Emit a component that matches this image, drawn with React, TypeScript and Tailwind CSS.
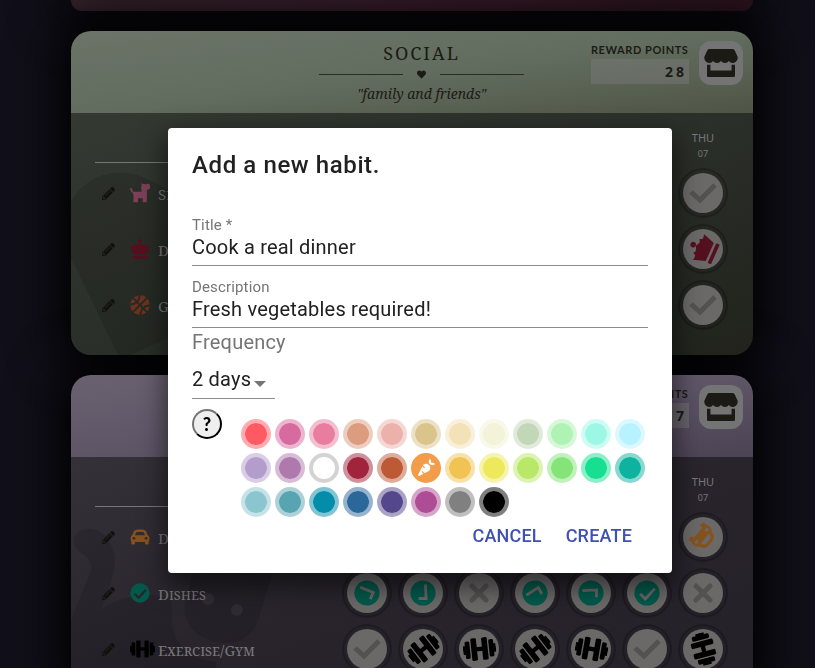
import React, { useState } from "react";
import { FaBasketballBall, FaCarAlt, FaCarrot, FaHeart, FaPencilAlt } from "react-icons/fa";

type IconName = "dog" | "crown" | "ball" | "car" | "done" | "gym";
type Mark = "check" | "cross" | number;

interface Habit {
  name: string;
  icon: IconName;
  color: string;
  marks: Mark[];
}

const SERIF = "font-['Noto_Serif','DejaVu_Serif_Condensed','DejaVu_Serif',serif]";
const DAYS = [
  ["FRI", "01"],
  ["SAT", "02"],
  ["SUN", "03"],
  ["MON", "04"],
  ["TUE", "05"],
  ["WED", "06"],
  ["THU", "07"],
];

const idle: Mark[] = ["check", "check", "check", "check", "check", "check"];

const SOCIAL: Habit[] = [
  { name: "Snuggle Dog", icon: "dog", color: "text-[#7c4058]", marks: [...idle, "check"] },
  { name: "Date Night", icon: "crown", color: "text-[#55101f]", marks: [...idle, -66] },
  { name: "Games", icon: "ball", color: "text-[#6b321f]", marks: [...idle, "check"] },
];

const HOME: Habit[] = [
  { name: "Drive", icon: "car", color: "text-[#84521f]", marks: [...idle, 130] },
  { name: "Dishes", icon: "done", color: "text-[#035a4c]", marks: [-111, -45, "cross", 195, 225, 0, "cross"] },
  { name: "Exercise/Gym", icon: "gym", color: "text-black", marks: ["check", -38, -6, -38, 10, "check", 75] },
];

const COLORS = [
  "#ff5a64", "#d76a9f", "#e87da0", "#db9c80", "#ebb1aa", "#dac48c", "#f3e2b7", "#f2f3d8", "#c2d6b8", "#aef2b4", "#9df7e5", "#b8f1ff",
  "#b39dcc", "#b079ae", "#ffffff", "#a2233c", "#bc5a36", "#f39c4a", "#f1c353", "#eee95a", "#b9e869", "#84e478", "#17df92", "#0eb3a0",
  "#8bc5d0", "#59a4b1", "#048cab", "#2b6799", "#54478b", "#ae4c96", "#808080", "#000000",
];

function HabitIcon({ name, size, tick = "#6b6868" }: { name: IconName; size: number; tick?: string }) {
  if (name === "ball") return <FaBasketballBall size={size} />;
  if (name === "car") return <FaCarAlt size={size} />;
  if (name === "dog")
    return (
      <svg width={size} height={size} viewBox="0 0 60 60" fill="currentColor" aria-hidden="true">
        <path d="M0 17q3-4 6 0l3 9h26l-1-8q-2-6 1-9l-1-8 6 2 10 1 5-2q4 0 4 4l2 5q0 6-4 8l-7 3 1 12-1 24H38V46H24v12H10l1-18-2-10Q2 27 0 17z" />
      </svg>
    );
  if (name === "crown")
    return (
      <svg width={size} height={size} viewBox="0 0 60 60" fill="currentColor" aria-hidden="true">
        <circle cx="30" cy="7" r="6" />
        <path d="M0 19q6 3 11 1l3-6q4 5 9 3l7-4 7 4q5 2 9-3l3 6q5 2 11-1L51 46H9z" />
        <rect x="7" y="51" width="46" height="8" rx="2" />
      </svg>
    );
  if (name === "done")
    return (
      <svg width={size} height={size} viewBox="0 0 60 60" fill="none" aria-hidden="true">
        <circle cx="30" cy="30" r="29" fill="currentColor" />
        <path d="M14 32l12 12 22-24" stroke={tick} strokeWidth="6.5" />
      </svg>
    );
  return (
    <svg width={Math.round(size * 1.25)} height={size} viewBox="0 0 76 60" fill="currentColor" aria-hidden="true">
      <rect x="0" y="20" width="6" height="20" rx="2" />
      <rect x="5" y="10" width="11" height="40" rx="3" />
      <rect x="19" y="4" width="13" height="52" rx="3" />
      <rect x="30" y="25" width="16" height="10" />
      <rect x="44" y="4" width="13" height="52" rx="3" />
      <rect x="60" y="10" width="11" height="40" rx="3" />
      <rect x="70" y="20" width="6" height="20" rx="2" />
    </svg>
  );
}

function StoreIcon() {
  return (
    <svg width="34" height="28" viewBox="0 0 98 82" fill="currentColor" aria-hidden="true">
      <path d="M16 0h66q5 0 7 4l8 17q2 5 0 10-4 10-14 10-7 0-11-6-4 6-11 6-8 0-12-6-4 6-12 6-7 0-11-6-4 6-11 6Q5 41 1 31q-2-5 0-10L9 4q2-4 7-4z" />
      <path d="M8 46h10v17h62V46h10v32q0 4-4 4H12q-4 0-4-4z" />
    </svg>
  );
}

function DayMark({ habit, mark, day }: { habit: Habit; mark: Mark; day: string }) {
  return (
    <button
      type="button"
      aria-label={`${habit.name}, ${day}`}
      className="mx-auto flex size-[50px] items-center justify-center rounded-full border-2 border-black/20 bg-black/5"
    >
      <span className="flex size-10 items-center justify-center rounded-full bg-[#6b6868] text-[#535253]">
        {mark === "check" && (
          <svg width="28" height="22" viewBox="0 0 28 22" fill="none" stroke="currentColor" strokeWidth="5" aria-hidden="true">
            <path d="M2 10l9 8L26 3" />
          </svg>
        )}
        {mark === "cross" && (
          <svg width="20" height="20" viewBox="0 0 20 20" stroke="currentColor" strokeWidth="5" strokeLinecap="round" aria-hidden="true">
            <path d="M3 3l14 14M17 3L3 17" />
          </svg>
        )}
        {typeof mark === "number" && (
          <span className={habit.color} style={{ transform: `rotate(${mark}deg)` }}>
            <HabitIcon name={habit.icon} size={habit.icon === "crown" ? 28 : 26} />
          </span>
        )}
      </span>
    </button>
  );
}

interface CardProps {
  title: string;
  motto: string;
  points: number;
  habits: Habit[];
  headClass: string;
  bodyClass: string;
  art: React.ReactNode;
}

function Card({ title, motto, points, habits, headClass, bodyClass, art }: CardProps) {
  return (
    <section className="overflow-hidden rounded-[20px] shadow-[0_0_50px_12px_#000]">
      <header className={`grid h-[82px] grid-cols-[181px_1fr_162px] text-[#1c1a14] ${headClass}`}>
        <div className={`col-start-2 flex flex-col items-center pt-[10px] ${SERIF}`}>
          <h2 className="text-lg leading-[25px] tracking-[2px]">{title}</h2>
          <div className="flex h-4 items-center gap-[14px]">
            <span className="h-px w-[84px] bg-[#2c2c24]" />
            <FaHeart size={9} />
            <span className="h-px w-[84px] bg-[#2c2c24]" />
          </div>
          <p className="text-sm leading-6 italic">"{motto}"</p>
        </div>
        <div className="flex justify-between pt-[10px] pr-[10px]">
          <div className="w-[98px] pt-px">
            <p className="font-[Lato,sans-serif] text-[11px] leading-4 font-bold tracking-wider whitespace-nowrap">REWARD POINTS</p>
            <p className="mt-px h-[25px] bg-[#787878]/50 pr-[2px] text-right font-['Noto_Sans',sans-serif] text-sm leading-[25px] font-bold tracking-[3px]">
              {points}
            </p>
          </div>
          <button type="button" aria-label={`${title} store`} className="flex size-11 items-center justify-center rounded-xl bg-[#747475]">
            <StoreIcon />
          </button>
        </div>
      </header>
      <div className={`relative pr-[22px] pb-[22px] pl-6 ${bodyClass}`}>
        <svg className="absolute top-0 left-0" width="240" height="242" viewBox="0 0 240 242" aria-hidden="true">
          {art}
        </svg>
        <table className="relative w-full table-fixed border-collapse text-[#77777a]">
          <thead>
            <tr>
              <th scope="col" aria-label="Habit" className="h-[52px] p-0 align-top">
                <div className="mr-3 h-[50px] border-b border-[#777774]" />
              </th>
              {DAYS.map(([day, date]) => (
                <th key={day} scope="col" className="w-14 p-0 pt-[17px] align-top font-['Noto_Sans',sans-serif] font-normal">
                  <div className="text-[11px] leading-4">{day}</div>
                  <div className="text-[9px] leading-4">{date}</div>
                </th>
              ))}
            </tr>
          </thead>
          <tbody>
            {habits.map((habit) => (
              <tr key={habit.name}>
                <th scope="row" className="h-14 p-0 text-left font-normal">
                  <div className="flex items-center pl-[7px]">
                    <button type="button" aria-label={`Edit ${habit.name}`} className="mr-[15px] text-[#12100b]">
                      <FaPencilAlt size={13} />
                    </button>
                    <span className={`flex w-7 ${habit.color}`}>
                      <HabitIcon name={habit.icon} size={20} tick="#29242c" />
                    </span>
                    <span className={`pt-[2px] text-[15px] leading-5 [font-variant:small-caps] ${SERIF}`}>{habit.name}</span>
                  </div>
                </th>
                {habit.marks.map((mark, i) => (
                  <td key={i} className="p-0">
                    <DayMark habit={habit} mark={mark} day={DAYS[i][0]} />
                  </td>
                ))}
              </tr>
            ))}
          </tbody>
        </table>
      </div>
    </section>
  );
}

function TextField({ id, label, initial }: { id: string; label: string; initial: string }) {
  return (
    <div className="flex flex-col border-b border-[#8c8c8c]">
      <label htmlFor={id} className="text-[15px] leading-[18px] tracking-[0.01em] text-[#757575]">
        {label}
      </label>
      <input
        id={id}
        defaultValue={initial}
        className="h-[31px] w-full bg-transparent pb-[6px] text-xl tracking-[0.01em] text-[#212121] outline-none"
      />
    </div>
  );
}

function HabitDialog() {
  const [picked, setPicked] = useState("#f39c4a");
  return (
    <div className="fixed inset-0 flex items-center justify-center pt-[33px] pl-[25px]">
      <form
        role="dialog"
        aria-labelledby="dialog-title"
        className="w-full max-w-[504px] rounded bg-white px-6 py-[21px] font-[Roboto,sans-serif] shadow-[0_11px_25px_4px_rgba(0,0,0,0.5)]"
      >
        <h1 id="dialog-title" className="text-2xl leading-8 font-medium tracking-wide text-[#212121]">
          Add a new habit.
        </h1>
        <div className="mt-[35px] flex flex-col gap-3">
          <TextField id="title" label="Title *" initial="Cook a real dinner" />
          <TextField id="description" label="Description" initial="Fresh vegetables required!" />
        </div>
        <label htmlFor="frequency" className="block text-xl leading-7 tracking-[0.01em] text-[#757575]">
          Frequency
        </label>
        <div className="relative mt-2 w-[83px] border-b border-[#8c8c8c]">
          <select
            id="frequency"
            defaultValue="2"
            className="block h-[34px] w-full appearance-none bg-transparent pb-[4px] text-xl tracking-[0.01em] text-[#212121] outline-none"
          >
            <option value="1">1 day</option>
            <option value="2">2 days</option>
            <option value="3">3 days</option>
          </select>
          <svg className="pointer-events-none absolute right-[9px] bottom-[11px]" width="12" height="6" viewBox="0 0 12 6" aria-hidden="true">
            <path d="M0 0h12L6 6z" fill="#757575" />
          </svg>
        </div>
        <div className="mt-[10px] flex items-start justify-between">
          <button
            type="button"
            aria-label="Help"
            className="size-[30px] rounded-full border-2 border-t-[#767676] border-r-black border-b-black border-l-[#767676] bg-[#efefef] font-[Lato,sans-serif] text-lg leading-none font-black text-black"
          >
            ?
          </button>
          <div role="radiogroup" aria-label="Colour" className="mt-[10px] mr-[3px] grid grid-cols-12 gap-1">
            {COLORS.map((color) => (
              <label key={color} className="relative block size-[30px]">
                <input
                  type="radio"
                  name="color"
                  aria-label={color}
                  checked={picked === color}
                  onChange={() => setPicked(color)}
                  className="block size-[30px] appearance-none rounded-full border-4"
                  style={{
                    backgroundColor: color,
                    borderColor: color === "#ffffff" ? "#d3d3d3" : picked === color ? color : `${color}80`,
                    backgroundClip: picked === color ? "border-box" : "padding-box",
                  }}
                />
                {picked === color && <FaCarrot size={17} className="pointer-events-none absolute top-[6px] left-[7px] text-white" />}
              </label>
            ))}
          </div>
        </div>
        <div className="mt-[3px] flex justify-end gap-2 pr-2 text-lg leading-8 font-medium tracking-[0.01em] text-[#3f51b5]">
          <button type="button" className="px-2">CANCEL</button>
          <button type="submit" className="px-2">CREATE</button>
        </div>
      </form>
    </div>
  );
}

export default function App() {
  return (
    <div className="h-screen overflow-hidden bg-[#11101a]">
      <main className="flex flex-col gap-5 pr-[62px] pl-[71px]">
        <div className="h-[11px] shrink-0 rounded-b-[20px] bg-linear-to-r from-[#34222c] via-[#361c2a] to-[#2b131e] shadow-[0_0_50px_12px_#000]" />
        <Card
          title="SOCIAL"
          motto="family and friends"
          points={28}
          habits={SOCIAL}
          headClass="bg-linear-to-br from-[#6c7368] via-[#626d5f] to-[#4f5546]"
          bodyClass="bg-linear-to-br from-[#343932] via-[#2b2f29] to-[#21231c]"
          art={<path d="M0 88C15 62 50 50 80 68l160 82-143 75-37 17H47L0 145z" fill="#000" fillOpacity="0.12" />}
        />
        <Card
          title="HOME"
          motto="home sweet home"
          points={17}
          habits={HOME}
          headClass="bg-linear-to-br from-[#6a6170] via-[#5e5567] to-[#4c4355]"
          bodyClass="bg-linear-to-br from-[#353139] via-[#29242c] to-[#252129]"
          art={
            <g fill="#000" fillOpacity="0.12">
              <path d="M3 83C3 70 28 66 38 84c10 16 8 28-8 69 15-11 40-21 70-11l1 8c-3 30 9 50 44 55l-2 37H0v-79l20-50C22 95 3 100 3 83z" />
              <path d="M122 112h81l-16 52c-6 18-24 25-42 21-22-5-34-20-31-38z" />
              <g fill="#fff" fillOpacity="0.05">
                <circle cx="137" cy="142" r="6" />
                <circle cx="166" cy="153" r="6" />
              </g>
            </g>
          }
        />
      </main>
      <HabitDialog />
    </div>
  );
}
